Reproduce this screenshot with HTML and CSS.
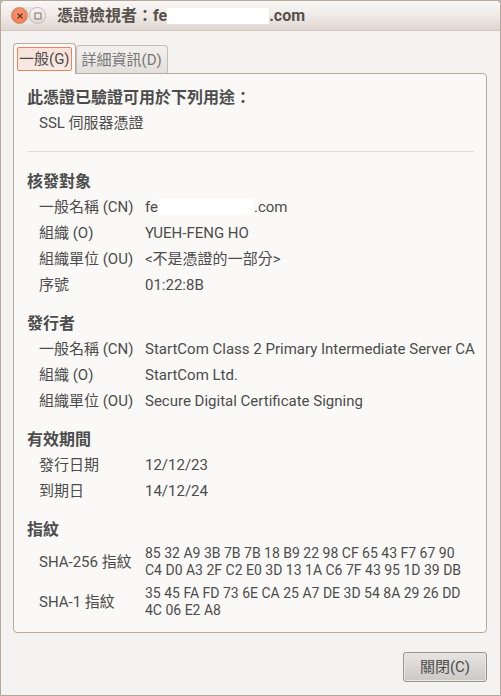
FILE: index.html
```
<!DOCTYPE html>
<html lang="zh-Hant">
<head>
<meta charset="utf-8">
<title>憑證檢視者</title>
<link rel="stylesheet" href="styles.css">
</head>
<body>
<div class="window">
  <header class="titlebar">
    <div class="window-controls">
      <button class="control control-close" type="button" aria-label="關閉視窗">
        <svg viewBox="0 0 16 16" width="16" height="16"><path d="M5.500 5.500l5 5M10.500 5.500l-5 5" stroke="#6b3523" stroke-width="1.400" fill="none"/></svg>
      </button>
      <button class="control" type="button" aria-label="最大化">
        <svg viewBox="0 0 16 16" width="16" height="16"><rect x="5" y="5" width="6" height="6" stroke="#77736e" fill="none"/></svg>
      </button>
    </div>
    <h1 class="title">憑證檢視者：fe<span class="redacted redacted-title"></span>.com</h1>
  </header>
  <main class="content">
    <div class="tabs" role="tablist">
      <button class="tab tab-active" type="button" role="tab" aria-selected="true"><span class="tab-focus">一般(G)</span></button>
      <button class="tab" type="button" role="tab" aria-selected="false">詳細資訊(D)</button>
    </div>
    <section class="panel" role="tabpanel">
      <h2 class="heading">此憑證已驗證可用於下列用途：</h2>
      <p class="usage">SSL 伺服器憑證</p>
      <hr class="divider">
      <h2 class="heading">核發對象</h2>
      <table class="fields">
        <tr><th scope="row">一般名稱 (CN)</th><td>fe<span class="redacted redacted-name"></span>.com</td></tr>
        <tr><th scope="row">組織 (O)</th><td>YUEH-FENG HO</td></tr>
        <tr><th scope="row">組織單位 (OU)</th><td>&lt;不是憑證的一部分&gt;</td></tr>
        <tr><th scope="row">序號</th><td>01:22:8B</td></tr>
      </table>
      <h2 class="heading">發行者</h2>
      <table class="fields">
        <tr><th scope="row">一般名稱 (CN)</th><td>StartCom Class 2 Primary Intermediate Server CA</td></tr>
        <tr><th scope="row">組織 (O)</th><td>StartCom Ltd.</td></tr>
        <tr><th scope="row">組織單位 (OU)</th><td>Secure Digital Certificate Signing</td></tr>
      </table>
      <h2 class="heading">有效期間</h2>
      <table class="fields">
        <tr><th scope="row">發行日期</th><td>12/12/23</td></tr>
        <tr><th scope="row">到期日</th><td>14/12/24</td></tr>
      </table>
      <h2 class="heading">指紋</h2>
      <table class="fields fingerprints">
        <tr><th scope="row">SHA-256 指紋</th><td>85 32 A9 3B 7B 7B 18 B9 22 98 CF 65 43 F7 67 90<br>C4 D0 A3 2F C2 E0 3D 13 1A C6 7F 43 95 1D 39 DB</td></tr>
        <tr><th scope="row">SHA-1 指紋</th><td>35 45 FA FD 73 6E CA 25 A7 DE 3D 54 8A 29 26 DD<br>4C 06 E2 A8</td></tr>
      </table>
    </section>
    <footer class="actions"><button class="close-button" type="button">關閉(C)</button></footer>
  </main>
</div>
</body>
</html>
```
FILE: styles.css
```
* { box-sizing: border-box; }

body {
  margin: 0;
  background: #b9b4ae;
  color: #4c4c4c;
  font: 15px/26px Roboto, "Noto Sans CJK TC", sans-serif;
}

button { font: inherit; color: inherit; margin: 0; }

.window {
  min-height: 100vh;
  display: flex;
  flex-direction: column;
  border: 1px solid #b5a79c;
  border-radius: 5px 5px 0 0;
  background: #f4f3f1;
  overflow: hidden;
}

.titlebar {
  height: 30px;
  display: flex;
  align-items: center;
  gap: 11px;
  padding: 0 10px;
  border-bottom: 1px solid #d3c6bd;
  background: linear-gradient(#f9f7f5, #efeae6 50%, #dfd7d0);
}

.window-controls {
  display: flex;
  gap: 1px;
  border-radius: 9px;
  background: #e9e5e1;
}

.control {
  width: 17px;
  height: 17px;
  padding: 0;
  display: grid;
  place-items: center;
  border: 1px solid #c3bcb5;
  border-radius: 50%;
  background: linear-gradient(#f8f6f4, #e0dbd6);
}

.control-close {
  border-color: #cb8b70;
  background: radial-gradient(circle at 50% 40%, #f99b78, #f37447);
}

.title {
  margin: 0;
  color: #56514c;
  font-size: 16px;
  line-height: 26px;
  white-space: nowrap;
}

.redacted {
  display: inline-block;
  height: 16px;
  vertical-align: -3px;
  background: #fff;
}

.redacted-title { width: 102px; }
.redacted-name { width: 96px; }

.content {
  flex: 1;
  display: flex;
  flex-direction: column;
  padding: 12px 13px 13px 12px;
}

.tabs {
  display: flex;
  align-items: flex-end;
}

.tab {
  height: 28px;
  padding: 0 5px;
  border: 1px solid #c6bcb3;
  border-bottom: 0;
  border-radius: 4px 4px 0 0;
  background: linear-gradient(#f3f1ef, #e3dfdb);
  color: #777;
  white-space: nowrap;
}

.tab-active {
  height: 31px;
  margin-bottom: -1px;
  padding: 3px;
  border-color: #b8aba0;
  background: #faf9f7;
  color: #4c4c4c;
  position: relative;
}

.tab-focus {
  display: block;
  padding: 0 1px;
  border: 1px solid #f0835b;
  border-radius: 2px;
  background: linear-gradient(#f9e3da, #f8e9e3);
  line-height: 22px;
}

.panel {
  flex: 1;
  padding: 10px 12px 10px 13px;
  border: 1px solid #b8aba0;
  border-radius: 0 4px 4px 4px;
  background: #faf9f7;
}

.heading {
  margin: 12px 0 0;
  padding-top: 2px;
  font-size: 16px;
  line-height: 24px;
}

.heading:first-child { margin-top: 0; }

.usage { margin: 0; padding-left: 12px; }

.divider {
  margin: 15px 0 16px;
  border: 0;
  border-top: 1px solid #dfdedc;
}

.fields {
  width: 100%;
  border-collapse: collapse;
  table-layout: fixed;
}

.fields th {
  width: 118px;
  padding: 0 0 0 12px;
  font-weight: normal;
  text-align: left;
}

.fields td { padding: 0; white-space: nowrap; }

.fingerprints th,
.fingerprints td {
  padding-top: 3px;
  padding-bottom: 3px;
  line-height: 17px;
}

.fingerprints td { font-size: 14px; }

.actions {
  display: flex;
  justify-content: flex-end;
  padding-top: 19px;
}

.close-button {
  height: 30px;
  padding: 0 16px;
  border: 1px solid #99958f;
  border-radius: 3px;
  background: linear-gradient(#e7e5e3, #ccc8c5);
  box-shadow: inset 0 0 0 1px #e9e7e5;
  line-height: 26px;
}
```
